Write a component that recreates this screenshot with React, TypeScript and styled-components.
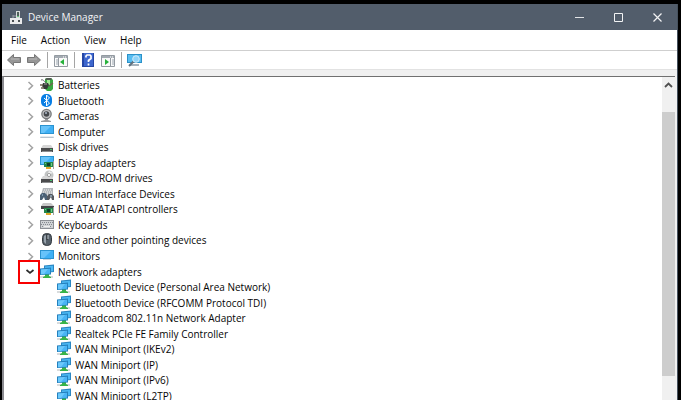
import React from 'react';
import styled, { createGlobalStyle } from 'styled-components';

const GlobalStyle = createGlobalStyle`
  * { box-sizing: border-box; }
  html, body, #root { height: 100%; margin: 0; }
  body {
    background: #000;
    color: #050505;
    font-family: "Open Sans", "Noto Sans", sans-serif;
    font-size: 10px;
    overflow: hidden;
  }
`;

const Desktop = styled.div`
  display: flex;
  height: 100vh;
  padding: 4px 3px 0 2px;
`;

const Window = styled.main`
  display: flex;
  flex: 1;
  flex-direction: column;
  min-width: 0;
  overflow: hidden;
  border-right: 1px solid #46525f;
  background: #f0f0f0;
`;

const TitleBar = styled.header`
  display: flex;
  flex: none;
  align-items: center;
  height: 26px;
  padding-left: 8px;
  background: #525d6b;
  color: #f2f4f6;
`;

const Title = styled.h1`
  flex: 1;
  margin: 0 0 0 6px;
  font-size: 10px;
  font-weight: 400;
`;

const BareButton = styled.button`
  display: flex;
  align-items: center;
  justify-content: center;
  padding: 0;
  border: 0;
  background: transparent;
  color: inherit;
  font: inherit;
`;

const CaptionButton = styled(BareButton)`
  width: 39px;
  height: 26px;
  &:hover { background: #6a7583; }
`;

const MenuBar = styled.nav`
  display: flex;
  flex: none;
  gap: 14px;
  height: 21px;
  padding: 0 9px;
  border-bottom: 1px solid #cfcfcf;
  background: #fff;
`;

const Toolbar = styled.div`
  display: flex;
  flex: none;
  align-items: center;
  height: 19px;
  padding-left: 2px;
  border-bottom: 1px solid #e2e2e2;
  background: #fff;
`;

const ToolButton = styled(BareButton)`
  width: 20px;
  height: 18px;
`;

const Divider = styled.span`
  width: 1px;
  height: 16px;
  margin: 0 3px;
  background: #a5a5a5;
`;

const Content = styled.section`
  display: flex;
  flex: 1;
  min-height: 0;
  margin: 6px 2px 0 0;
  border-top: 1px solid #707070;
  border-left: 2px solid #8b8b90;
  background: #fff;
`;

const TreePane = styled.div`
  flex: 1;
  min-width: 0;
  overflow: hidden;
`;

const Tree = styled.ul`
  display: grid;
  grid-auto-rows: 1fr;
  min-height: 326px;
  margin: 0;
  padding: 0;
  list-style: none;
`;

const TreeRow = styled.li<{ $nested?: boolean }>`
  position: relative;
  display: flex;
  align-items: center;
  min-height: 0;
  padding-left: ${(p) => (p.$nested ? 53 : 20)}px;
  line-height: 14px;
  white-space: nowrap;
`;

const Toggle = styled(BareButton)`
  width: 12px;
  height: 14px;
  margin-right: 4px;
`;

const Label = styled.span`
  margin-left: 4px;
  padding-top: 1px;
`;

const Highlight = styled.span`
  position: absolute;
  top: -3px;
  left: 14px;
  width: 22px;
  height: 24px;
  border: 2px solid #f80000;
  pointer-events: none;
`;

const Scrollbar = styled.div`
  display: flex;
  flex: none;
  flex-direction: column;
  width: 13px;
  background: #f0f0f0;
`;

const ScrollButton = styled(BareButton)`
  height: 16px;
`;

const ScrollTrack = styled.div`
  flex: 1;
  padding: 19px 0 24px;
`;

const ScrollThumb = styled.div`
  height: 100%;
  background: #cdcdcd;
`;

const Icon = styled.svg`
  display: block;
  flex: none;
`;

const Glyph = ({ children, w = 15, h = 15 }: { children: React.ReactNode; w?: number; h?: number }) => (
  <Icon width={w} height={h} viewBox={`0 0 ${w} ${h}`} aria-hidden="true">
    {children}
  </Icon>
);

const TreeGlyph = ({ children }: { children: React.ReactNode }) => (
  <Icon width={14} height={15} viewBox="0 0 14 15" aria-hidden="true">
    {children}
  </Icon>
);

const Screen = ({ y = 2 }) => (
  <>
    <rect y={y} width="14" height="9" fill="#2b93d0" />
    <rect x="1" y={y + 1} width="12" height="7" fill="#3fb0f5" />
    <path d={`M1 ${y + 1}h10l-7 7H1z`} fill="#66c3fa" />
  </>
);

const Card = () => (
  <>
    <path d="M4 7h9v5H4z" fill="#23864a" />
    <path d="M7 8h3v3H7z" fill="#103f29" />
    <path d="M5 8h1v1H5zM11 8h1v3h-1z" fill="#72c984" />
    <path d="M6 12h5v2H6z" fill="#e1a72a" />
    <path d="M13 6h1v8h-1z" fill="#a0a5a0" />
  </>
);

const Drive = () => (
  <>
    <path d="M3 6h8l2 3H1z" fill="#d6d6d6" />
    <path d="M1 9h12v4H1z" fill="#4b4b4d" />
    <path d="M2 12.5h10" stroke="#8b8d8f" />
    <path d="M10 10h2v1h-2z" fill="#48c26e" />
  </>
);

const icons: Record<string, React.ReactNode> = {
  battery: (
    <TreeGlyph>
      <path d="M5 2l2-1h4l2 2v9l-2 2H7l-2-2z" fill="#39a841" />
      <path d="M7 3h3v5H7z" fill="#a5eb96" />
      <path d="M5 2l2-1h4l1 1-1 1H6z" fill="#545b54" />
      <path d="M1 3c3-1 3 2 5 3" stroke="#666" fill="none" />
      <path d="M3 6h5l1 2-2 4H4L2 9z" fill="#363a37" />
      <path d="M0 8h3M1 11h3M9 9l4-3" stroke="#706650" fill="none" strokeWidth="1.5" />
      <path d="M4 7h3" stroke="#a6a6a0" />
    </TreeGlyph>
  ),
  bluetooth: (
    <TreeGlyph>
      <rect x="1" y="1" width="11" height="13" rx="5" fill="#087ee5" />
      <path d="M4 5l5.5 5-3 3V2l3 3L4 10" fill="none" stroke="#fff" />
    </TreeGlyph>
  ),
  camera: (
    <TreeGlyph>
      <path d="M5 10h3v2l3 1v1H1v-1l4-1z" fill="#9a9c9f" />
      <circle cx="6.5" cy="6" r="5.3" fill="#77797b" />
      <circle cx="6.5" cy="6" r="4" fill="#c0c1c3" />
      <circle cx="6.5" cy="6" r="2.8" fill="#45484c" />
      <circle cx="6" cy="5" r="1" fill="#adb9c9" />
    </TreeGlyph>
  ),
  computer: (
    <TreeGlyph>
      <Screen y={1} />
      <path d="M1 12h12l1 2H0z" fill="#b7c4cf" />
      <path d="M1 12.5h12" stroke="#e3ebf1" />
    </TreeGlyph>
  ),
  disk: <TreeGlyph><Drive /></TreeGlyph>,
  display: <TreeGlyph><Screen y={1} /><Card /></TreeGlyph>,
  dvd: (
    <TreeGlyph>
      <circle cx="9" cy="5" r="4.5" fill="#c3c5c5" />
      <path d="M9 1L7 5l6-2z" fill="#eff0ef" />
      <Drive />
      <circle cx="9" cy="5" r="1.6" fill="#fff" stroke="#8e8e8e" strokeWidth=".8" />
    </TreeGlyph>
  ),
  hid: (
    <TreeGlyph>
      <path d="M3 2h10v7H1z" fill="#b3b6ba" />
      <path d="M4 4h8M3 6h9M3 8h9" stroke="#f0f1f2" strokeDasharray="1 1" />
      <path d="M0 14V9l2-2h3l2 2v5H5l-1-3-2 3z" fill="#4c6176" />
      <path d="M7 10l2-2h3l2 2v4h-2l-1-3-2 3H7z" fill="#55585f" />
      <path d="M2 9h1M10 10h2" stroke="#b2d4ec" />
    </TreeGlyph>
  ),
  ide: (
    <TreeGlyph>
      <path d="M3 2h8l3 3H1z" fill="#c8c8c8" />
      <path d="M1 5h13v3H1z" fill="#434547" />
      <Card />
    </TreeGlyph>
  ),
  keyboard: (
    <TreeGlyph>
      <path d="M0 3h14v9H0z" fill="#8c9096" />
      <path d="M1 4h12v7H1z" fill="#d0d3d6" />
      <path d="M2 5.5h11M1 7.5h11M2 9.5h10" stroke="#858a91" strokeDasharray="1 1" />
      <path d="M4 9.5h6" stroke="#eee" />
    </TreeGlyph>
  ),
  mouse: (
    <TreeGlyph>
      <rect x="2.5" y="1.5" width="9" height="12" rx="4" fill="#56616b" stroke="#343a40" />
      <path d="M4 4v6l2 2V3z" fill="#97a2ab" />
      <path d="M7 2v6" stroke="#24282b" />
      <path d="M8 3v4" stroke="#c2c9ce" />
    </TreeGlyph>
  ),
  monitor: <TreeGlyph><Screen /><path d="M3 11.5h8" stroke="#c5d4df" /></TreeGlyph>,
  network: (
    <TreeGlyph>
      <path d="M0 12h13v2H0z" fill="#d9dcdd" />
      <path d="M5 10h4v2l2 1v1H3v-1l2-1z" fill="#38b449" />
      <path d="M4 1.5L14 .5V8L4 9z" fill="#2a86c2" />
      <path d="M5 2.5l8-.8v5.5L5 8z" fill="#4bb8f4" />
      <path d="M0 4.5l11-1v7l-11 .5z" fill="#2480bd" />
      <path d="M1 5.5l9-.8v5l-9 .5z" fill="#49b4f5" />
      <path d="M1 5.5l7-.6-4 5.1-3 .2z" fill="#6cc9fc" />
    </TreeGlyph>
  ),
};

const Chevron = ({ open }: { open?: boolean }) => (
  <Glyph w={12} h={12}>
    {open ? (
      <path d="M2.5 5l3.5 3 3.5-3" fill="none" stroke="#2c2c2c" strokeWidth="1.7" />
    ) : (
      <path d="M4.5 3l4 3.8-4 3.8" fill="none" stroke="#a3a3a3" strokeWidth="1.5" />
    )}
  </Glyph>
);

const Arrow = ({ right }: { right?: boolean }) => (
  <Glyph w={16} h={14}>
    <path
      d={right ? 'M14.5 7L8.5 1.5v3h-7v5h7v3z' : 'M1.5 7l6-5.5v3h7v5h-7v3z'}
      fill="#969696"
      stroke="#777"
    />
    <path d={right ? 'M3 6h8' : 'M5 6h8'} stroke="#b8b8b8" />
  </Glyph>
);

const PanelIcon = ({ right }: { right?: boolean }) => (
  <Glyph w={15} h={13}>
    <path d="M.5 1.5h13v11H.5z" fill="#fafafa" stroke="#939aa1" />
    <path d="M1 2h12v2H1z" fill="#a4abb2" />
    <path d="M9 3h1m1 0h1" stroke="#fff" />
    <path d={right ? 'M9.5 4v8' : 'M4.5 4v8'} stroke="#939aa1" />
    <path d={right ? 'M11 6h2m-2 2h2m-2 2h2' : 'M2 6h2M2 8h2m-2 2h2'} stroke="#9aa5af" />
    <path d={right ? 'M4 5l4 3-4 3z' : 'M10 5L6 8l4 3z'} fill="#27b13b" />
  </Glyph>
);

const categories = [
  ['battery', 'Batteries'],
  ['bluetooth', 'Bluetooth'],
  ['camera', 'Cameras'],
  ['computer', 'Computer'],
  ['disk', 'Disk drives'],
  ['display', 'Display adapters'],
  ['dvd', 'DVD/CD-ROM drives'],
  ['hid', 'Human Interface Devices'],
  ['ide', 'IDE ATA/ATAPI controllers'],
  ['keyboard', 'Keyboards'],
  ['mouse', 'Mice and other pointing devices'],
  ['monitor', 'Monitors'],
  ['network', 'Network adapters'],
];

const adapters = [
  'Bluetooth Device (Personal Area Network)',
  'Bluetooth Device (RFCOMM Protocol TDI)',
  'Broadcom 802.11n Network Adapter',
  'Realtek PCIe FE Family Controller',
  'WAN Miniport (IKEv2)',
  'WAN Miniport (IP)',
  'WAN Miniport (IPv6)',
  'WAN Miniport (L2TP)',
];

export default function App() {
  return (
    <Desktop>
      <GlobalStyle />
      <Window>
        <TitleBar>
          <Glyph w={12} h={15}>
            <path d="M6 1h4v7H6z" fill="#d7dcda" />
            <path d="M7 2h2v4H7z" fill="#50605b" />
            <path d="M7 6h2v1H7z" fill="#63c37b" />
            <path d="M3 5v4M3 6h3" stroke="#9ba1a7" />
            <path d="M0 8h12v6H0z" fill="#e9eaeb" />
            <path d="M2 10h2v2H2zM8 10h2v2H8z" fill="#4a5053" />
          </Glyph>
          <Title>Device Manager</Title>
          <CaptionButton aria-label="Minimize">
            <Glyph w={11} h={11}><path d="M1 5.5h9" stroke="#e2e4e7" /></Glyph>
          </CaptionButton>
          <CaptionButton aria-label="Maximize">
            <Glyph w={11} h={11}><path d="M1.5 1.5h8v8h-8z" fill="none" stroke="#f2f3f4" /></Glyph>
          </CaptionButton>
          <CaptionButton aria-label="Close">
            <Glyph w={11} h={11}><path d="M1.5 1.5l8 8m0-8l-8 8" stroke="#f2f3f4" strokeWidth="1.2" /></Glyph>
          </CaptionButton>
        </TitleBar>
        <MenuBar>
          {['File', 'Action', 'View', 'Help'].map((name) => (
            <BareButton key={name}>{name}</BareButton>
          ))}
        </MenuBar>
        <Toolbar>
          <ToolButton aria-label="Back"><Arrow /></ToolButton>
          <ToolButton aria-label="Forward"><Arrow right /></ToolButton>
          <Divider />
          <ToolButton aria-label="Show console tree"><PanelIcon /></ToolButton>
          <Divider />
          <ToolButton aria-label="Help">
            <Glyph w={12} h={14}>
              <path d="M0 0h12v14H0z" fill="#2546a4" />
              <path d="M2 0h9v13H2z" fill="#3d66cd" />
              <path d="M4 4.5V3l1-1h3l1 1v2.5L6.5 7.5V9M6.5 10.5v2" fill="none" stroke="#fff" strokeWidth="1.7" />
            </Glyph>
          </ToolButton>
          <ToolButton aria-label="Show action pane"><PanelIcon right /></ToolButton>
          <Divider />
          <ToolButton aria-label="Scan for hardware changes">
            <Glyph w={16} h={14}>
              <path d="M0 1h15v9H0z" fill="#2b91c8" />
              <path d="M1 2h13v7H1z" fill="#58bdf1" />
              <path d="M2 12h10" stroke="#a6b2bc" strokeWidth="2" />
              <path d="M7 8l-5 5" stroke="#61727e" strokeWidth="2" />
              <circle cx="9" cy="6" r="3.3" fill="#8fd3f8" stroke="#d2ecfa" />
            </Glyph>
          </ToolButton>
        </Toolbar>
        <Content>
          <TreePane>
            <Tree>
              {categories.map(([icon, name]) => {
                const open = icon === 'network';
                return (
                  <TreeRow key={name}>
                    <Toggle aria-label={name} aria-expanded={open}><Chevron open={open} /></Toggle>
                    {icons[icon]}
                    <Label>{name}</Label>
                    {open && <Highlight />}
                  </TreeRow>
                );
              })}
              {adapters.map((name) => (
                <TreeRow key={name} $nested>
                  {icons.network}
                  <Label>{name}</Label>
                </TreeRow>
              ))}
            </Tree>
          </TreePane>
          <Scrollbar>
            <ScrollButton aria-label="Scroll up">
              <Glyph w={9} h={8}><path d="M1 6l3.5-3.5L8 6" fill="none" stroke="#505050" strokeWidth="1.8" /></Glyph>
            </ScrollButton>
            <ScrollTrack><ScrollThumb /></ScrollTrack>
          </Scrollbar>
        </Content>
      </Window>
    </Desktop>
  );
}
